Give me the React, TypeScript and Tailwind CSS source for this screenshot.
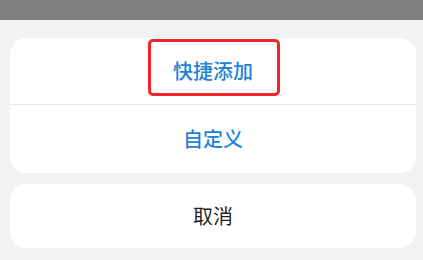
export default function App() {
  return (
    <div
      className="w-[423px] h-[260px] bg-[#f2f3f5] flex flex-col overflow-hidden"
      style={{ fontFamily: '"Noto Sans CJK SC", "Noto Sans", sans-serif' }}
    >
      <div className="h-[20px] bg-[#808080] shrink-0" />
      <div className="px-[10px] pt-[18px] flex flex-col gap-[11px]">
        <div className="bg-white rounded-[16px] w-[406px]">
          <div className="relative h-[67px] flex items-center justify-center border-b border-[#e6e7e9]">
            <span className="text-[20px] font-medium text-[#2182d8] leading-none">快捷添加</span>
            <div className="absolute left-[138px] top-[1px] w-[132px] h-[57px] border-[3px] border-[#f5232a] rounded-[5px]" />
          </div>
          <div className="h-[68px] flex items-center justify-center">
            <span className="text-[20px] font-medium text-[#2182d8] leading-none">自定义</span>
          </div>
        </div>
        <div className="bg-white rounded-[16px] w-[406px] h-[64px] flex items-center justify-center">
          <span className="text-[20px] text-[#1f1f1f] leading-none">取消</span>
        </div>
      </div>
    </div>
  );
}
